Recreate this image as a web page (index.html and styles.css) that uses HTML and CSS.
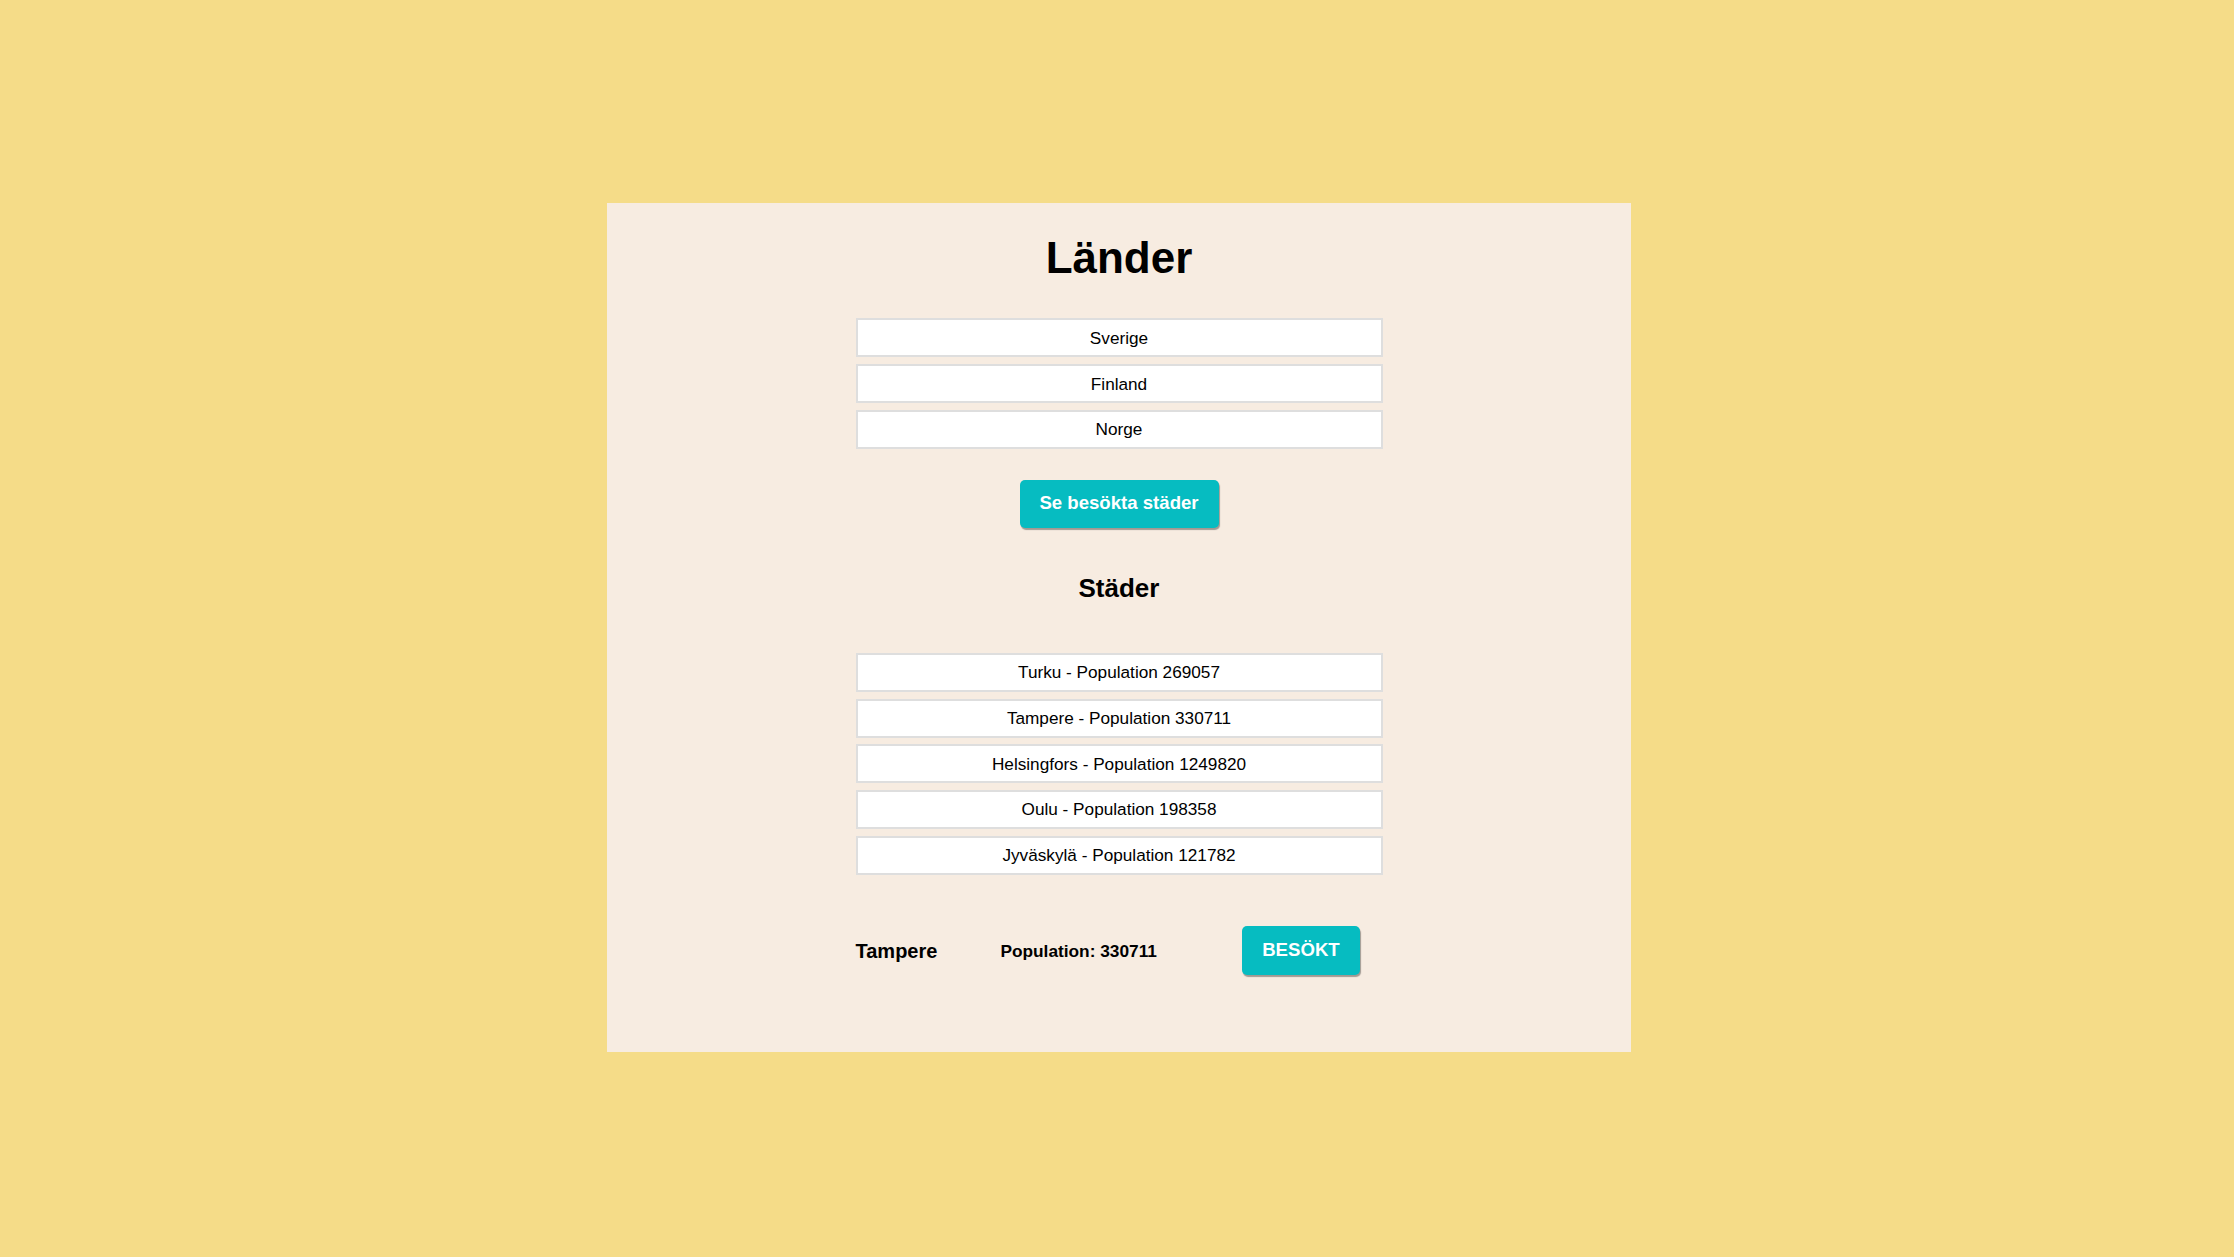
FILE: index.html
```html
<!DOCTYPE html>
<html lang="sv">
<head>
<meta charset="utf-8">
<title>Länder</title>
<link rel="stylesheet" href="styles.css">
</head>
<body>
<main class="panel">
  <h1 class="title">Länder</h1>
  <ul class="list countries">
    <li class="item">Sverige</li>
    <li class="item">Finland</li>
    <li class="item">Norge</li>
  </ul>
  <button class="btn btn-visited">Se besökta städer</button>
  <h3 class="subtitle">Städer</h3>
  <ul class="list cities">
    <li class="item">Turku - Population 269057</li>
    <li class="item">Tampere - Population 330711</li>
    <li class="item">Helsingfors - Population 1249820</li>
    <li class="item">Oulu - Population 198358</li>
    <li class="item">Jyväskylä - Population 121782</li>
  </ul>
  <div class="detail">
    <h4 class="city-name">Tampere</h4>
    <p class="city-pop">Population: 330711</p>
    <button class="btn btn-mark">BESÖKT</button>
  </div>
</main>
</body>
</html>
```

FILE: styles.css
```css
* { box-sizing: border-box; }

html, body {
  margin: 0;
  padding: 0;
}

body {
  background: #f5dc88;
  min-height: 100vh;
  display: flex;
  align-items: center;
  justify-content: center;
  font-family: "Liberation Sans", Arial, sans-serif;
  color: #000;
}

.panel {
  width: 1024px;
  margin: 0 0 2px 4px;
  background: #f7ece1;
  padding: 30.5px 0 77px;
  display: flex;
  flex-direction: column;
  align-items: center;
}

.title {
  margin: 0;
  font-size: 44px;
  line-height: 50px;
  font-weight: 700;
}

.list {
  list-style: none;
  margin: 0;
  padding: 0;
  width: 527px;
  display: flex;
  flex-direction: column;
  gap: 6.5px;
}

.countries { margin-top: 35px; }

.cities { margin-top: 50px; }

.item {
  height: 39.2px;
  background: #fff;
  border: 2px solid #dedede;
  display: flex;
  align-items: center;
  justify-content: center;
  font-size: 17.2px;
  padding-top: 1px;
}

.btn {
  border: none;
  background: #06bcc1;
  color: #fff;
  font-family: "Liberation Sans", Arial, sans-serif;
  font-weight: 700;
  font-size: 18.6px;
  border-radius: 5px;
  box-shadow: 1px 2px 1px rgba(0, 0, 0, 0.35);
  cursor: pointer;
  display: flex;
  align-items: center;
  justify-content: center;
  padding: 0 0 2px;
}

.btn-visited {
  margin-top: 31px;
  width: 199px;
  height: 48px;
}

.subtitle {
  margin: 45px 0 0;
  font-size: 26px;
  line-height: 30px;
  font-weight: 700;
}

.detail {
  margin-top: 51.5px;
  width: 527px;
  display: flex;
  align-items: center;
}

.city-name {
  margin: 0;
  font-size: 20px;
  font-weight: 700;
  padding-top: 1px;
}

.city-pop {
  margin: 0 0 0 63px;
  font-size: 17.3px;
  font-weight: 700;
  padding-top: 1px;
}

.btn-mark {
  margin-left: 85px;
  width: 118px;
  height: 49px;
}
```
